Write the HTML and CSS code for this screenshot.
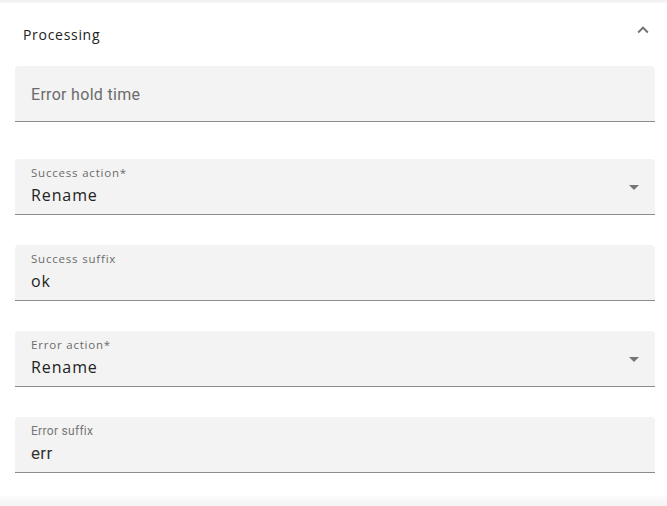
FILE: index.html
```html
<!DOCTYPE html>
<html lang="en">
<head>
	<meta charset="UTF-8">
	<title>Processing</title>
	<link rel="stylesheet" href="styles.css">
</head>
<body>
	<div class="top-edge"></div>
	<div class="panel">
		<div class="panel-head">
			<span class="panel-title">Processing</span>
			<svg class="chevron" width="22" height="22" viewBox="0 0 24 24"><path d="M7.41 15.41 12 10.83l4.59 4.58L18 14l-6-6-6 6z" fill="#6f6f6f"/></svg>
		</div>
		<div class="panel-body">
			<div class="field field-empty">
				<span class="placeholder">Error hold time</span>
			</div>
			<div class="helper"></div>

			<div class="field select">
				<label class="label">Success action*</label>
				<div class="value">Rename</div>
				<span class="arrow"></span>
			</div>

			<div class="field">
				<label class="label">Success suffix</label>
				<div class="value">ok</div>
			</div>

			<div class="field select">
				<label class="label">Error action*</label>
				<div class="value">Rename</div>
				<span class="arrow"></span>
			</div>

			<div class="field roboto">
				<label class="label">Error suffix</label>
				<div class="value">err</div>
			</div>
		</div>
	</div>
	<div class="bottom-edge"></div>
</body>
</html>
```
FILE: styles.css
```css
*{
	padding: 0;
	margin: 0;
	box-sizing: border-box;
}
body{
	width: 667px;
	height: 506px;
	overflow: hidden;
	background: #fff;
	font-family: "Open Sans", "Noto Sans", sans-serif;
	color: rgba(0,0,0,0.87);
}
.top-edge{
	height: 2px;
	background: #f2f2f2;
}
.bottom-edge{
	height: 10px;
	background: linear-gradient(#fcfcfc, #f3f3f3);
}
.panel{
	background: #fff;
	height: 494px;
	border-top: 1px solid #f7f7f7;
}
.panel-head{
	display: flex;
	align-items: center;
	justify-content: space-between;
	height: 61px;
	padding: 0 13px 0 23px;
}
.panel-title{
	font-size: 14px;
	font-weight: 500;
	letter-spacing: 0.7px;
	color: #222;
	padding-top: 1px;
}
.chevron{
	margin-top: -7px;
}
.panel-body{
	padding: 2px 12px 0 15px;
	display: flex;
	flex-direction: column;
	gap: 29.9px;
}
.field{
	position: relative;
	height: 56px;
	background: #f3f3f3;
	border-radius: 4px 4px 0 0;
	border-bottom: 1px solid #8c8c8c;
	padding: 7px 16px 0;
}
.field-empty{
	display: flex;
	align-items: center;
	padding-top: 0;
}
.placeholder{
	font-family: Roboto, sans-serif;
	font-size: 16px;
	color: #6b6b6b;
	letter-spacing: 0.3px;
	padding-top: 2px;
}
.helper{
	height: 0;
	margin-top: -22.9px;
}
.label{
	display: block;
	font-size: 11.5px;
	line-height: 14px;
	color: #6b6b6b;
	letter-spacing: 0.8px;
}
.value{
	font-size: 16px;
	line-height: 22px;
	margin-top: 4px;
	letter-spacing: 0.9px;
	color: #222;
}
.roboto .label{
	font-family: Roboto, sans-serif;
	font-size: 12px;
	letter-spacing: 0.3px;
	color: #777;
}
.roboto .value{
	font-family: Roboto, sans-serif;
	font-size: 17px;
	letter-spacing: 0.3px;
	color: #333;
}
.arrow{
	position: absolute;
	right: 16px;
	top: 26px;
	width: 0;
	height: 0;
	border-left: 5px solid transparent;
	border-right: 5px solid transparent;
	border-top: 5px solid #757575;
}
```
